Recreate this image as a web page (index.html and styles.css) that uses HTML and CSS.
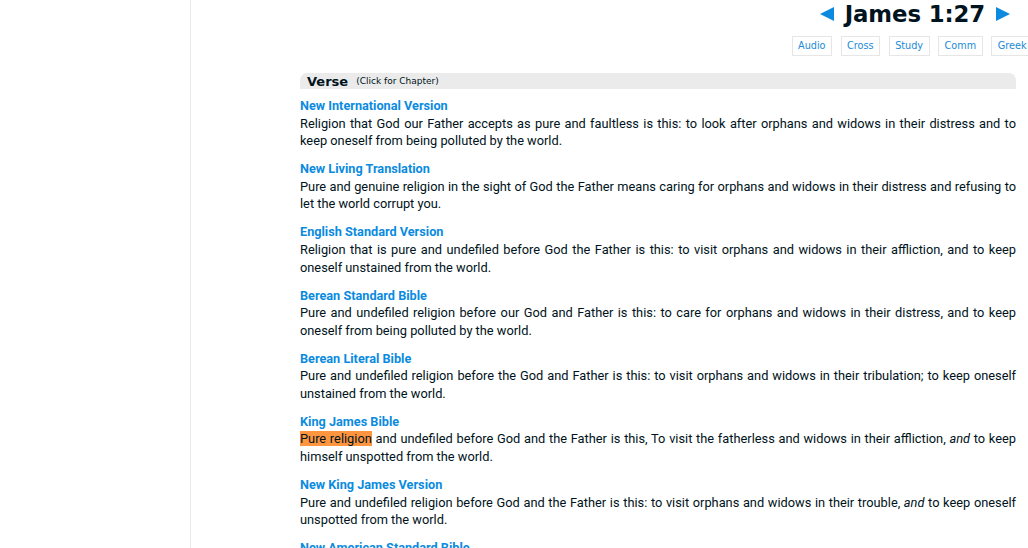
FILE: index.html
```html
<!DOCTYPE html>
<html>
<head>
<meta charset="utf-8">
<link rel="stylesheet" href="styles.css">
</head>
<body>
<div class="page">
  <aside class="sidebar"></aside>
  <main class="main">
    <div class="nav">
      <span class="arrow left"></span>
      <span class="ref">James 1:27</span>
      <span class="arrow right"></span>
    </div>
    <div class="tools">
      <span class="tool">Audio</span>
      <span class="tool">Cross</span>
      <span class="tool">Study</span>
      <span class="tool">Comm</span>
      <span class="tool">Greek</span>
    </div>
    <div class="content">
      <div class="bar"><span class="bar-title">Verse</span><span class="bar-note">(Click for Chapter)</span></div>
      <div class="version"><div class="vname">New International Version</div><p>Religion that God our Father accepts as pure and faultless is this: to look after orphans and widows in their distress and to keep oneself from being polluted by the world.</p></div>
      <div class="version"><div class="vname">New Living Translation</div><p>Pure and genuine religion in the sight of God the Father means caring for orphans and widows in their distress and refusing to let the world corrupt you.</p></div>
      <div class="version"><div class="vname">English Standard Version</div><p>Religion that is pure and undefiled before God the Father is this: to visit orphans and widows in their affliction, and to keep oneself unstained from the world.</p></div>
      <div class="version"><div class="vname">Berean Standard Bible</div><p>Pure and undefiled religion before our God and Father is this: to care for orphans and widows in their distress, and to keep oneself from being polluted by the world.</p></div>
      <div class="version"><div class="vname">Berean Literal Bible</div><p>Pure and undefiled religion before the God and Father is this: to visit orphans and widows in their tribulation; to keep oneself unstained from the world.</p></div>
      <div class="version"><div class="vname">King James Bible</div><p><span class="hl">Pure religion</span> and undefiled before God and the Father is this, To visit the fatherless and widows in their affliction, <i>and</i> to keep himself unspotted from the world.</p></div>
      <div class="version"><div class="vname">New King James Version</div><p>Pure and undefiled religion before God and the Father is this: to visit orphans and widows in their trouble, <i>and</i> to keep oneself unspotted from the world.</p></div>
      <div class="version"><div class="vname">New American Standard Bible</div><p>Pure and undefiled religion in the sight of our God and Father is this: to visit orphans and widows in their distress, and to keep oneself unstained by the world.</p></div>
    </div>
  </main>
</div>
</body>
</html>
```
FILE: styles.css
```css
html, body {
  margin: 0;
  padding: 0;
  overflow: hidden;
  background: #fff;
}
body {
  font-family: Roboto, "Liberation Sans", sans-serif;
  color: #001320;
}
.page {
  display: flex;
  width: 1028px;
  height: 548px;
  overflow: hidden;
}
.sidebar {
  width: 190px;
  flex: none;
  border-right: 1px solid #e8e8e8;
}
.main {
  flex: 1;
  min-width: 0;
  padding: 0 12px 0 109px;
}
.nav {
  display: flex;
  justify-content: flex-end;
  align-items: center;
  height: 28px;
  padding-right: 6px;
  gap: 11px;
}
.ref {
  font-family: Verdana, "DejaVu Sans", sans-serif;
  font-weight: bold;
  font-size: 22.8px;
  line-height: 28px;
  color: #001320;
  letter-spacing: -0.1px;
}
.arrow {
  width: 0;
  height: 0;
  border-top: 7px solid transparent;
  border-bottom: 7px solid transparent;
}
.arrow.left { border-right: 14px solid #0b8ae0; }
.arrow.right { border-left: 14px solid #0b8ae0; }
.tools {
  display: flex;
  justify-content: flex-end;
  gap: 8.5px;
  margin-top: 8px;
  margin-right: -17px;
}
.tool {
  font-family: Verdana, "DejaVu Sans", sans-serif;
  font-size: 9.7px;
  color: #1a8ad8;
  border: 1px solid #e6e6e6;
  padding: 0 5.5px;
  height: 18px;
  line-height: 18px;
}
.content {
  margin-top: 17px;
}
.bar {
  background: #ebebeb;
  border-radius: 7px 7px 0 0;
  height: 16px;
  display: flex;
  align-items: center;
  padding-left: 7px;
  margin-bottom: 8px;
}
.bar-title {
  font-family: Verdana, "DejaVu Sans", sans-serif;
  font-weight: bold;
  font-size: 13px;
  color: #001320;
}
.bar-note {
  font-family: Verdana, "DejaVu Sans", sans-serif;
  font-size: 9px;
  margin-left: 8px;
  color: #001320;
}
.version {
  margin-bottom: 10.4px;
}
.vname {
  font-weight: bold;
  font-size: 12.7px;
  color: #0a8be0;
  line-height: 17.6px;
}
.version p {
  margin: 0;
  font-size: 12.8px;
  line-height: 17.6px;
  text-align: justify;
}
.hl {
  background: #ff953f;
}
```
